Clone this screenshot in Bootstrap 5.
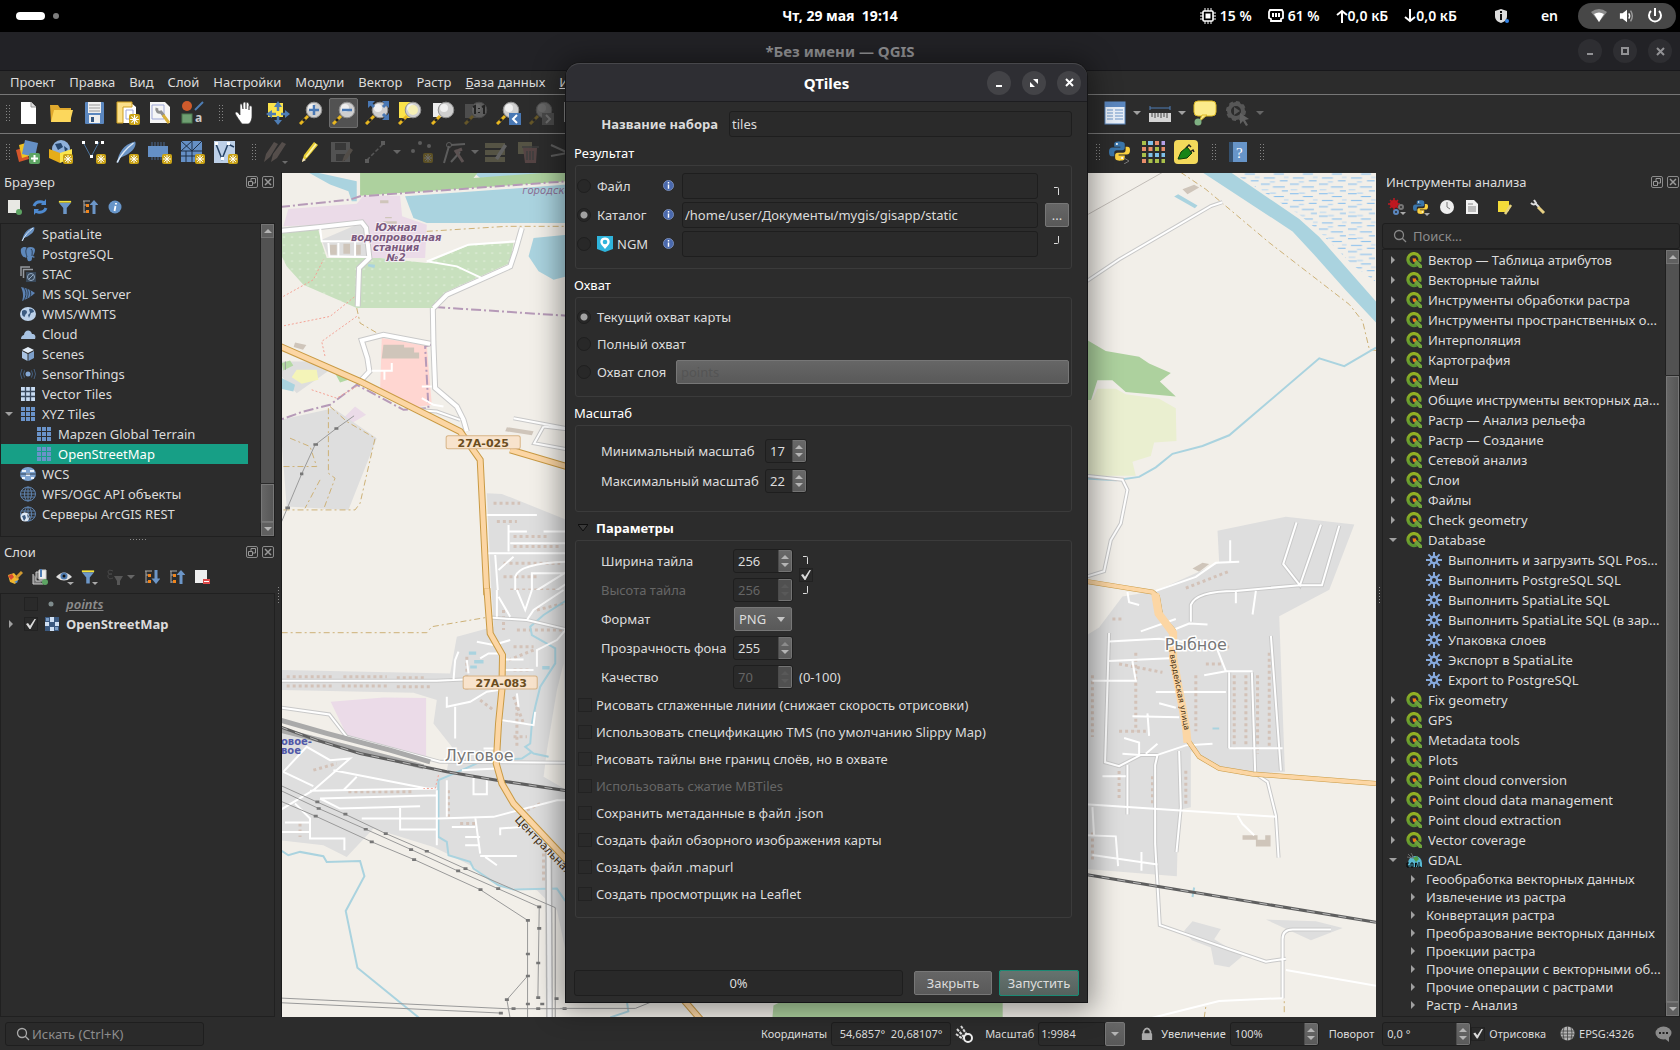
<!DOCTYPE html>
<html lang="ru" data-bs-theme="dark">
<head>
<meta charset="utf-8">
<meta name="viewport" content="width=device-width, initial-scale=1">
<title>QGIS — QTiles</title>
<link href="https://cdn.jsdelivr.net/npm/bootstrap@5.3.0/dist/css/bootstrap.min.css" rel="stylesheet">
<style>
body{font-family:"Noto Sans",sans-serif;font-size:13px;line-height:20px;background:#2c2c2c;color:#dcdcdc;overflow:hidden}
svg{display:block;flex:none}
button{color:inherit;font:inherit}
/* fixed spacers of the tool bars */
.sp2,.sp4,.sp8{flex:none;width:2px}
.sp4{width:4px}.sp8{width:8px}
.shellbar{height:32px;background:#000;color:#fff;font-size:14px;font-weight:600;padding:0 4px}
.shellbar .side{flex:1 1 0;min-width:0}
.clock{font-weight:700}
.ws-pill{width:29px;height:8px;border-radius:4px;background:#fff;margin-left:12px}
.ws-dot{width:6px;height:6px;border-radius:3px;background:#7d7d7d}
.syspill{height:26px;border-radius:13px;background:#474747;padding:0 13px;gap:12px;margin-left:20px}
.net{margin-right:20px}
.wintitle{height:39px;background:#222226;border-bottom:1px solid #18181b;color:#929295;font-weight:700;font-size:15px}
.wbtns{display:flex;justify-content:flex-end;gap:11px}
.wbtn{width:24px;height:24px;border-radius:12px;border:0;padding:0;background:#2e2e32;color:#929295;display:grid;place-items:center}
.menubar{height:23px;padding:0 0 2px 3px}
.menubar a{color:#dcdcdc;text-decoration:none;padding:0 7px;white-space:nowrap}
.tbar{height:39px;border-top:1px solid #777;padding:0 0 2px 4px}
.tbtn{width:33px;height:30px;border:0;background:none;padding:0;display:grid;place-items:center;flex:none}
.tbtn.off{opacity:.3}
.tbtn.pressed{background:#525252;border:1px solid #6e6e6e;border-radius:2px;width:29px;margin:0 2px}
.grip{width:5px;height:18px;margin:0 1px;flex:none;background-image:radial-gradient(#858585 1px,transparent 1px);background-size:3px 3px}
.grip-v{width:3px;height:18px;background-image:radial-gradient(#8a8a8a 1px,transparent 1px);background-size:3px 3px}
.grip-h{width:18px;height:3px;background-image:radial-gradient(#8a8a8a 1px,transparent 1px);background-size:3px 3px}
.drop{width:0;height:0;border:4px solid transparent;border-top-color:#a0a0a0;border-bottom:0;flex:none}
/* stretch of the tool bars that lies under the plug-in window */
.under-a{width:507px;flex:none}.under-b{width:516px;flex:none}
.ldock{width:275px;flex:none}
.rdock{width:298px;flex:none}
.split{width:6px;flex:none}
.lsplit{width:7px;border-right:1px solid #1c1c1c}
.dockhead{height:20px;padding:0 1px 0 4px}
.mini{width:12px;height:12px;border:1px solid #8a8a8a;border-radius:2px;padding:0;background:none;display:grid;place-items:center;color:#999}
.dtools{height:31px;padding:0 2px 1px}
.dtools .tbtn{width:25px;height:24px}
.treebox{border:1px solid #202020;display:flex;overflow:hidden}
.browser{height:314px}
.browser .tw{padding-right:3px}
.dsplit{height:5px}
.treebox ul{flex:1 1 0;min-width:0;overflow:hidden}
.treebox li{height:20px;line-height:20px;display:flex;align-items:center;white-space:nowrap;overflow:hidden}
.treebox li svg{width:16px;height:16px;margin-right:6px}
.treebox li span{overflow:hidden;text-overflow:ellipsis}
.treebox li .tickbox{margin:0 6px 0 4px}
.ghost{color:#8c8c8c}
.tw{width:19px;height:10px;flex:none;display:grid;place-items:center}
.tw.r::before{content:"";border:4px solid transparent;border-left:4px solid #a0a0a0;border-right:0}
.tw.d::before{content:"";border:4px solid transparent;border-top:4px solid #a0a0a0;border-bottom:0}
.ind{padding-left:16px}
.picked{background:#179f86;color:#fff;margin-right:12px}
.sbar{width:14px;flex:none;border-left:1px solid #202020;display:flex;flex-direction:column;background:#525252}
.sbar b{height:14px;background:#606060;border:1px solid #747474;display:grid;place-items:center;flex:none}
.sbar .thumb{background:linear-gradient(90deg,#666,#575757);border:1px solid #787878;outline:1px solid #2a2a2a}
.browser .thumb{height:38px}
.above{height:112px}
.tri-u,.tri-d{width:0;height:0;border:4px solid transparent}
.tri-u{border-bottom-color:#b4b4b4;border-top:0}
.tri-d{border-top-color:#b4b4b4;border-bottom:0}
.rtree li svg{margin-left:4px}
.rtree li.alg{padding-left:39px}
.rtree li.sub{height:18px;line-height:18px;padding-left:20px}
.rtree li.sub span{padding-left:4px}
.form-control.dk,.dk{background:#2a2a2a;border:1px solid #1e1e1e;border-radius:3px;color:#dcdcdc;font-size:13px;line-height:18px;padding:2px;min-height:0;height:26px;box-shadow:none}
.form-control.dk:disabled{background:#2a2a2a;color:#666}
.bare{background:none;border:0;outline:0;padding:0;color:#dcdcdc;font-size:13px;flex:1 1 0;min-width:0}
.bare::placeholder{color:#8d8d8d}
.statusbar{height:33px;font-size:11px}
.statusbar .dk{height:24px;font-size:11px}
.statusbar label{margin-right:4px}
.locator{width:199px;margin-left:5px}
.f120{width:120px}.f67{width:67px}.f20{width:20px}
.m8{margin-left:8px}.m10{margin-left:10px}.m16{margin-left:16px}.m21{margin-left:21px}
.spin.w89{width:89px}
.qwin{position:absolute;left:566px;top:63px;width:521px;background:#2c2c2c;border-radius:14px 14px 0 0;box-shadow:0 2px 28px 6px rgba(0,0,0,.4),0 0 0 1px #1d1d1f;z-index:5}
.qhead{height:39px;background:#2e2e33;border-top:1px solid #47474b;border-bottom:1px solid #1d1d20;border-radius:14px 14px 0 0;padding:0 6px;font-size:15px;font-weight:700;color:#fff}
.qhead .wbtn{background:#434347;color:#fff}
.qhead>div{flex:1 1 0}
.qbody{padding:9px 8px 6px 8px}
.qform{margin-right:7px}
.nmlab{width:144px;margin-right:11px}
.gtitle{height:28px;padding-top:6px;line-height:20px;font-size:13px;margin:0}
.gtitle.fold{padding-top:4px}
.gbox{border:1px solid #3b3b3b;border-radius:3px;margin-left:1px;padding:7px 2px 0 1px}
.g-out{height:104px}.g-ext{height:100px;padding-top:5px}.g-scale{height:87px;padding-top:10px}.g-par{padding:5px 2px 10px 2px}
.r29{height:29px}.r27{height:27px}.r30{height:30px}
.g-out .r29{align-items:flex-start}
.gbox .form-check-input{width:14px;height:14px;margin:0 6px 0 0;background-color:#282828;border:1px solid #1f1f1f;box-shadow:none;float:none;flex:none;opacity:1}
.gbox .form-check-input:checked[type=radio]{background:radial-gradient(circle,#a2a2a2 3px,#282828 4px);border-color:#1f1f1f}
.tickbox{appearance:none;width:14px;height:14px;margin:0;border:1px solid #222;background:#2a2a2a;flex:none;display:grid;place-items:center}
.tickbox:checked::before{content:"";width:10px;height:10px;background:#dadada;clip-path:polygon(0 50%,20% 40%,40% 68%,85% 0,100% 0,45% 100%,35% 100%)}
.lab{width:86px;height:26px;flex:none;display:flex;align-items:center}
.laylab{width:79px}
.gray{background:linear-gradient(#666,#595959);border:1px solid #777;border-radius:2px;color:#dcdcdc;font-size:13px;line-height:20px;padding:0;height:24px}
.dots{width:24px;margin:1px 0 0 7px}
.laysel{appearance:none;color:#545454!important;opacity:1!important;padding:0 4px}
.spin{display:flex;border:1px solid #1e1e1e;border-radius:3px;height:24px;background:#2a2a2a;flex:none}
.spin input{width:0;flex:1 1 0;border:0;background:none;color:#dcdcdc;padding:0 0 0 4px;font:inherit;appearance:textfield;-moz-appearance:textfield;outline:0}
.spin input::-webkit-inner-spin-button{appearance:none;margin:0}
.spin input:disabled{color:#656565}
.spin>span{width:14px;background:linear-gradient(#686868,#5a5a5a);border:1px solid #747474;border-radius:0 2px 2px 0;display:flex;flex-direction:column;justify-content:space-evenly;align-items:center;border-left-color:#4b4b4b}
.spin.dim>span{background:#505050}.spin.dim i{opacity:.1}
.w42{width:42px}.w60{width:60px}
.fieldlab{margin-left:24px;width:164px;flex:none}
.plabels{width:155px;padding-left:23px;flex:none}
.plabels+.caretbox{margin-left:1px}
.beside{margin-left:6px}
.dimtext{color:#666}
.qprog{height:26px;background:#292929;border:1px solid #1e1e1e;border-radius:3px;width:329px;font-size:13px;color:#dcdcdc}
.qfoot{margin-top:52px}
.closebtn{width:78px}
.btn.gray:hover{color:#fff}
.btn.run{width:80px;height:26px;margin-left:7px;background:linear-gradient(#66736f,#55625e);border-color:#17866f;outline:1px solid #1a8a74;outline-offset:-1px}
.fmt{appearance:none;width:58px;padding:0 4px}
.caretbox{position:relative;display:flex}
.caretbox .drop{position:absolute;right:7px;top:10px;border-top-color:#c4c4c4;border-width:5px 4px 0}
.work{min-height:0}
.canvas{background:#f2efe9;margin-top:1px}
#themap{position:absolute;inset:0;width:100%;height:100%}
#themap path{vector-effect:non-scaling-stroke;fill:none}
#themap .fa{stroke:none}
.road{stroke:#fff;stroke-width:2}
.case{stroke:#c9c9c9;stroke-width:4}
.wide{stroke-width:6}.widein{stroke-width:4}
.oc{stroke:#c99a44;stroke-width:7}.oo{stroke:#fcd6a4;stroke-width:5}
.thin-oc{stroke-width:5}.thin-oo{stroke-width:4}
.wat{stroke:#aad3df;stroke-width:2}
.pow{stroke:#9a9a9a;stroke-width:1}
.trk{stroke:#cdb177;stroke-width:1;stroke-dasharray:6 3 2 3}
.red{stroke:#f5a396;stroke-width:1;stroke-dasharray:2 2}
.bnd{stroke:#b69ab8;stroke-width:2;stroke-dasharray:10 3 2 3}
.hou{stroke:#d3c2b8;stroke-width:3;stroke-dasharray:3 3}
.rail{stroke:#5f5f5f;stroke-width:3}.raildash{stroke:#bbb;stroke-width:1;stroke-dasharray:8 8}
#themap .lake{fill:#aad3df}#themap .wood{fill:#add19e}#themap .ind-area{fill:#ebdbe8}#themap .town{fill:#dedede}#themap .mall{fill:#ffd6d1}#themap .house{fill:#cfc5ba}#themap .land{fill:#f2efe9}#themap .orch{fill:url(#trees)}#themap .bog{fill:url(#marsh)}#themap .golf{fill:#eaefd0}#themap .pole{fill:#777}#themap .park{fill:#b3d9a3}#themap .pitch{fill:#f4f4b8}
</style>
</head>
<body class="d-flex flex-column vh-100">
<svg width="0" height="0" class="position-absolute" aria-hidden="true"><defs>
<linearGradient id="gq" x1="0" y1="0" x2="0" y2="1"><stop offset="0" stop-color="#93b023"/><stop offset="1" stop-color="#589632"/></linearGradient>
<symbol id="q" viewBox="0 0 16 16"><path d="M10.500 13A6 6 0 1 1 13.600 9.600" fill="none" stroke="url(#gq)" stroke-width="3.200"/><path d="M8.500 8l2.200 0L16 13.200V16h-2.800L8.500 11.300z" fill="#6fa33c"/><path d="M6.600 6.200l3.400.4.200 1.600-1.600 2-1.600-.6z" fill="#ee7913"/></symbol>
<symbol id="alg" viewBox="0 0 16 16"><g stroke="#86a9dc" stroke-width="2"><path d="M8 0v16M0 8h16M2.4 2.4l11.200 11.200M13.600 2.400L2.400 13.600"/></g><circle cx="8" cy="8" r="4.400" fill="#86a9dc"/><circle cx="8" cy="8" r="2" fill="#2c2c2c"/></symbol>
<symbol id="gdal" viewBox="0 0 16 16"><path d="M2 11a7 7 0 0 1 14 0v4H2z" fill="#57b7d2"/><path d="M7 6l4-2 2 3-3 3z" fill="#4f9f49"/><path d="M1 5l6 1M5 1l3 5M2 2l4 4" stroke="#6a6a6a"/><path d="M3 11H1v4h2v-2M5 15v-4h2v4zM9.500 15v-4l1 0 1 4M13 10v5h2" stroke="#050505" fill="none"/></symbol>
<symbol id="feather" viewBox="0 0 16 16"><path d="M2 15C3 9 6 3 14 1c1 1 0 5-3 7-2 2-5 3-7 4l-1 3z" fill="#6a93c4"/><path d="M2 15C5 9 9 5 13 2" stroke="#dbe8f6" fill="none"/></symbol>
<symbol id="pg" viewBox="0 0 16 16"><path d="M1 3c2-3 5-2 6-1 3-2 8-1 8 2 0 2-1 4-2 6l2 1c-1 1-2 1-3 0 0 2 0 4-2 4-2 1-3-1-3-4-1 1-2 1-2 0C3 12 0 7 1 3z" fill="#5e88bb"/><path d="M7 2c-2 3-1 5 0 9M11 3c2 2 1 4 1 7" stroke="#2c3e55" fill="none"/></symbol>
<symbol id="stac" viewBox="0 0 16 16"><path d="M1 10V1h9M3.500 12V3.500H13" fill="none" stroke="#95999f" stroke-width="1.500"/><rect x="6" y="6" width="10" height="10" fill="#38485a"/><circle cx="11" cy="11" r="3.500" fill="none" stroke="#93aac4"/><path d="M9 13l4-4" stroke="#93aac4"/></symbol>
<symbol id="ms" viewBox="0 0 16 16"><path d="M1 1c5 1 10 3 14 6-3 3-8 6-13 8 2-5 1-9-1-14z" fill="#5d83b4"/><path d="M4 2c3 4 2 9 0 12M7 3c2 4 1 7 0 9M10 4c1 3 1 5 0 7" stroke="#283748" fill="none"/></symbol>
<symbol id="glb" viewBox="0 0 16 16"><ellipse cx="8" cy="8" rx="8" ry="7" fill="#bdd2ea"/><path d="M2 5c2-2 5-1 5 1s-2 2-2 4-3 0-3-2zM9 3c3-1 5 1 5 3l-3 1-2 5-1-3 2-2z" fill="#3c5b80"/></symbol>
<symbol id="cloud" viewBox="0 0 16 16"><path d="M1 13c0-3 2-4 3-4 0-4 6-7 8-1 3 0 4 2 3 5z" fill="#a9c3e2"/></symbol>
<symbol id="cube" viewBox="0 0 16 16"><path d="M2 4l6-3 6 3-6 3z" fill="#e3edf8"/><path d="M2 5l5.500 3v7L2 12z" fill="#a9c3e2"/><path d="M14 5L8.500 8v7l5.500-3z" fill="#7c9fca"/></symbol>
<symbol id="sens" viewBox="0 0 16 16"><circle cx="8" cy="8" r="2.500" fill="#86a9d5"/><path d="M4.500 4.500q-2 3.500 0 7M11.500 4.500q2 3.500 0 7M2 3q-3 5 0 10M14 3q3 5 0 10" stroke="#46607f" fill="none"/></symbol>
<symbol id="vt" viewBox="0 0 16 16"><rect x="1" y="1" width="14" height="14" fill="#c9dcf2"/><path d="M1 5.500h14M1 10.500h14M5.500 1v14M10.500 1v14" stroke="#3a4a5e" stroke-width="1.300"/></symbol>
<symbol id="xyz" viewBox="0 0 16 16"><path d="M1 1h4v4H1zM6 1h4v4H6zM11 1h4v4h-4zM1 6h4v4H1zM6 6h4v4H6zM11 6h4v4h-4zM1 11h4v4H1zM6 11h4v4H6zM11 11h4v4h-4z" fill="#6a93c9"/></symbol>
<symbol id="wcs" viewBox="0 0 16 16"><ellipse cx="8" cy="8" rx="8" ry="7" fill="#7ea3d0"/><path d="M2 4h4v2H2zM10 4h4v2h-4zM6 7h4v3H6zM2 11h3v2H2zM11 11h3v2h-3z" fill="#e9f1fa"/><path d="M0 8h16" stroke="#2c3e55"/></symbol>
<symbol id="wfs" viewBox="0 0 16 16"><g fill="none" stroke="#5f83af"><ellipse cx="8" cy="8" rx="7.500" ry="7"/><ellipse cx="8" cy="8" rx="3.500" ry="7"/><path d="M8 1v14M1 5h14M.500 8h15M1 11h14"/></g></symbol>
<symbol id="arc" viewBox="0 0 16 16"><use href="#wfs"/><circle cx="5" cy="11" r="4.500" fill="#dfe9f5"/><path d="M2 10l3-1 1 3-2 3zM7 8l2 2-1 3z" fill="#3c5b80"/></symbol>
<symbol id="ras" viewBox="0 0 16 16"><rect x="1" y="1" width="14" height="14" fill="#3c5a80"/><path d="M6 1h4v5H6zM1 6h4v4H1zM11 6h4v4h-4zM6 11h4v4H6z" fill="#cfe0f4"/><path d="M2 2h3v3H2zM11 11h3v3h-3z" fill="#7b9cc4"/></symbol>
<symbol id="star" viewBox="0 0 10 10"><rect width="10" height="10" rx="2" fill="#caa316"/><path d="M5 1v8M1 5h8M2.200 2.200l5.600 5.600M7.800 2.200L2.200 7.800" stroke="#fff"/></symbol>
<symbol id="lens" viewBox="0 0 24 24"><path d="M1 23l8-8" stroke="#e8b720" stroke-width="3"/><path d="M4 20l2-2" stroke="#222" stroke-width="3"/><circle cx="15" cy="9" r="7.800" fill="#cfcfcf" stroke="#8f8f8f"/><ellipse cx="13" cy="7" rx="4" ry="4" fill="#f0f0f0"/></symbol>
<symbol id="info" viewBox="0 0 12 12"><circle cx="6" cy="6" r="5.500" fill="#4a69ad" stroke="#8aa0cf" stroke-width=".8"/><path d="M6 5v4.500M6 2.300v1.500" stroke="#fff" stroke-width="1.600"/></symbol>
<symbol id="funnel" viewBox="0 0 16 16"><path d="M1 3h14l-5 6v7H6V9z" fill="#6c96c8"/><path d="M1 1h14v2H1z" fill="#f4e33a"/></symbol>
<symbol id="coll" viewBox="0 0 16 16"><path d="M2 2v12M1 2h7M2 6h4M2 13h4" stroke="#aaa" fill="none"/><path d="M4 5h3v3H4zM4 11h3v3H4z" fill="#f0851c"/><path d="M12 15V4" stroke="#6c96c8" stroke-width="3"/><path d="M7.500 6L12 1l4.500 5z" fill="#6c96c8"/></symbol>
<symbol id="py" viewBox="0 0 24 24"><path d="M12 1c-5 0-6 1-6 3v3h7v1H4c-3 0-4 2-4 5s1 5 3 5h3v-4c0-2 1-3 3-3h6c2 0 3-1 3-3V4c0-2-2-3-6-3z" fill="#3b76ab"/><path d="M12 23c5 0 6-1 6-3v-3h-7v-1h9c3 0 4-2 4-5s-1-4-3-4h-2v3c0 3-1 4-3 4h-6c-2 0-3 1-3 3v3c0 2 2 3 6 3z" fill="#fbd140"/><circle cx="9" cy="4" r="1.200" fill="#fff"/><circle cx="15" cy="20" r="1.200" fill="#fff"/></symbol>
<symbol id="pencil" viewBox="0 0 24 24"><path d="M5 22l2-7L17 2l4 3L10 18z" fill="#e8cf34"/><path d="M9 17L19 4" stroke="#fff6b0" stroke-width="1.500"/><path d="M5 22l1-4 3 2z" fill="#f3e4c4"/></symbol>
<symbol id="mx" viewBox="0 0 8 8"><path d="M1 1l6 6M7 1L1 7" stroke="currentColor" stroke-width="1.500"/></symbol>
<symbol id="fl" viewBox="0 0 8 8"><path d="M.500 3.500h4v4h-4zM3 3V.500h4.500V5H5" stroke="currentColor" fill="none"/></symbol>
</defs></svg>

<header class="shellbar d-flex align-items-center">
  <div class="side d-flex align-items-center gap-2"><span class="ws-pill"></span><span class="ws-dot"></span></div>
  <div class="clock">Чт, 29 мая&nbsp; 19:14</div>
  <div class="side d-flex align-items-center justify-content-end">
    <svg class="me-1" width="16" height="16" viewBox="0 0 16 16"><rect x="3" y="3" width="10" height="10" rx="1" fill="none" stroke="#fff" stroke-width="1.600"/><rect x="5.500" y="5.500" width="5" height="5" fill="#fff"/><path d="M5 0v3M8 0v3M11 0v3M5 13v3M8 13v3M11 13v3M0 5h3M0 8h3M0 11h3M13 5h3M13 8h3M13 11h3" stroke="#fff"/></svg><span class="me-3">15 %</span>
    <svg class="me-1" width="16" height="14" viewBox="0 0 16 14"><path d="M2 1h12l1 2v6l-2 1v2H3v-2L1 9V3z" fill="none" stroke="#fff" stroke-width="1.800"/><path d="M4 4h2v4H4zM7 4h2v4H7zM10 4h2v4h-2z" fill="#fff"/></svg><span class="me-3">61 %</span>
    <svg width="12" height="14" viewBox="0 0 12 14"><path d="M6 14V2M1 6l5-4 5 4" fill="none" stroke="#fff" stroke-width="2"/></svg><span class="me-3">0,0 кБ</span>
    <svg width="12" height="14" viewBox="0 0 12 14"><path d="M6 0v12M1 8l5 4 5-4" fill="none" stroke="#fff" stroke-width="2"/></svg><span class="net">0,0 кБ</span>
    <svg class="ms-3" width="16" height="16" viewBox="0 0 16 16"><path d="M8 1l6 2v5c0 4-3 6-6 7-3-1-6-3-6-7V3z" fill="#ddd"/><path d="M8 6v6M8 3v2" stroke="#111" stroke-width="2"/><circle cx="14" cy="13" r="2" fill="#3584e4"/></svg>
    <span class="ms-4 ps-2">en</span>
    <div class="syspill d-flex align-items-center"><svg width="16" height="16" viewBox="0 0 16 16"><path d="M0 4q8-6 16 0L8 14z" fill="#8b8b8b"/><path d="M3 6q5-3 10 0l-5 8z" fill="#fff"/></svg><svg width="16" height="16" viewBox="0 0 18 16"><path d="M1 5h3l5-4v14l-5-4H1z" fill="#fff"/><path d="M11 5q2 3 0 6" stroke="#fff" stroke-width="1.600" fill="none"/><path d="M13 2q4 6 0 12" stroke="#999" stroke-width="1.600" fill="none"/></svg><svg width="16" height="16" viewBox="0 0 16 16"><path d="M8 0v8M4 3a6 6 0 1 0 8 0" stroke="#fff" stroke-width="2" fill="none"/></svg></div>
  </div>
</header>

<div class="wintitle d-flex align-items-center px-2">
  <div class="flex-fill w-25"></div><div>*Без имени — QGIS</div>
  <div class="flex-fill w-25 wbtns">
    <button class="wbtn" aria-label="Свернуть"><svg width="8" height="8"><path d="M1 7h6" stroke="currentColor" stroke-width="2"/></svg></button>
    <button class="wbtn" aria-label="Развернуть"><svg width="8" height="8"><rect x="1" y="1" width="6" height="6" fill="none" stroke="currentColor" stroke-width="2"/></svg></button>
    <button class="wbtn" aria-label="Закрыть окно"><svg width="9" height="9" viewBox="0 0 9 9"><path d="M1 1l7 7M8 1L1 8" stroke="currentColor" stroke-width="2"/></svg></button>
  </div>
</div>

<nav class="menubar d-flex align-items-center"><a href="#">Проект</a><a href="#">Правка</a><a href="#">Вид</a><a href="#">Слой</a><a href="#">Настройки</a><a href="#">Модули</a><a href="#">Вектор</a><a href="#">Растр</a><a href="#"><u>Б</u>аза данных</a><a href="#"><u>И</u>нтернет</a></nav>

<div class="tbar d-flex align-items-center">
  <span class="grip"></span>
  <button class="tbtn" aria-label="Новый"><svg width="24" height="24"><path d="M5 1h10l5 5v17H5z" fill="#fff"/><path d="M15 1v5h5" fill="#ddd" stroke="#999"/></svg></button>
  <button class="tbtn" aria-label="Открыть"><svg width="24" height="24"><path d="M1 4h8l2 3h11v14H2z" fill="#e0a92d"/><path d="M5 9h19l-3 12H2z" fill="#fcd75c"/></svg></button>
  <button class="tbtn" aria-label="Сохранить"><svg width="24" height="24"><rect x="3" y="1" width="19" height="22" rx="1" fill="#5b87bf"/><rect x="6" y="1" width="13" height="11" fill="#efefef"/><path d="M7 4h11M7 7h11M7 10h11" stroke="#999"/><rect x="7" y="14" width="11" height="8" fill="#eee"/><rect x="9" y="16" width="3" height="5" fill="#35567e"/></svg></button>
  <button class="tbtn" aria-label="Новый макет"><svg width="26" height="24"><path d="M3 1h13l6 5v16H3z" fill="#fff"/><path d="M3 1h15v5H9v16H3z" fill="#fbe08a" stroke="#cf9f1c"/><path d="M12 9h7v9h-7z" fill="none" stroke="#9fa8d8"/><use href="#star" x="15" y="13" width="11" height="11"/></svg></button>
  <button class="tbtn" aria-label="Макеты"><svg width="24" height="24"><path d="M2 1h15l5 5v16H2z" fill="#f6f6f6"/><path d="M4 4h12v14H4z" fill="none" stroke="#9fa8d8"/><path d="M9 7c-1 3 1 5 4 4l3 4" stroke="#8f8f8f" stroke-width="3" fill="none"/><path d="M15 14l6 8" stroke="#d9b13a" stroke-width="3"/></svg></button>
  <button class="tbtn" aria-label="Стили"><svg width="26" height="26"><circle cx="7" cy="6" r="5" fill="#cf5b2c"/><path d="M15 10l8-8" stroke="#4e7db5" stroke-width="2"/><rect x="2" y="14" width="10" height="9" fill="#6f9f72" stroke="#4d7a51"/><text x="15" y="22" font-size="12" font-weight="700" fill="#ccc">a</text></svg></button>
  <span class="sp8"></span><span class="grip"></span><span class="sp4"></span>
  <button class="tbtn" aria-label="Прокрутка"><svg width="24" height="24"><path d="M7 13V4q0-2 2-1l1 5V2q2-2 3 0v6-6q2-2 3 1v6-4q3-1 3 1v9c0 4-2 8-4 8H9c-2-3-6-8-7-11 1-2 3-1 5 2z" fill="#fff" stroke="#333" stroke-width=".7"/></svg></button>
  <button class="tbtn" aria-label="К выделению"><svg width="24" height="24"><path d="M2 2h15v14H2z" fill="#fbe34a"/><path d="M12 4v17M4 13h17" stroke="#4e7db5" stroke-width="2.500" stroke-dasharray="6 5"/><path d="M12 0l4 6H8zM12 24l4-5H8zM0 13l6-4v8zM24 13l-5-4v8z" fill="#4e7db5"/></svg></button>
  <button class="tbtn" aria-label="Увеличить"><svg width="24" height="24"><use href="#lens" width="24" height="24"/><path d="M15 4v10M10 9h10" stroke="#4978b4" stroke-width="2.500"/></svg></button>
  <button class="tbtn pressed" aria-label="Уменьшить"><svg width="24" height="24"><use href="#lens" width="24" height="24"/><path d="M10 9h10" stroke="#4978b4" stroke-width="2.500"/></svg></button>
  <button class="tbtn" aria-label="Полный охват"><svg width="24" height="24"><use href="#lens" width="24" height="24"/><path d="M3 0h7L3 7zM24 0v7l-7-7zM24 19v-7l-7 7z" fill="#4978b4"/><path d="M4 1l5 5M23 1l-5 5M23 18l-5-5" stroke="#4978b4" stroke-width="3"/></svg></button>
  <button class="tbtn" aria-label="К выделенному"><svg width="24" height="24"><path d="M1 1h12v16H1z" fill="#fbe34a"/><use href="#lens" width="24" height="24"/><circle cx="15" cy="9" r="5" fill="#f5efb5"/></svg></button>
  <button class="tbtn" aria-label="К слою"><svg width="24" height="24"><path d="M2 2h12v14H2z" fill="#eee"/><use href="#lens" width="24" height="24"/></svg></button>
  <button class="tbtn off" aria-label="Масштаб один к одному"><svg width="24" height="24"><path d="M1 3h12v14H1z" fill="#999"/><use href="#lens" width="24" height="24"/><path d="M9 6l2-1v8M15 7v1M15 11v1M18 6l2-1v8" stroke="#111" stroke-width="2" fill="none"/></svg></button>
  <button class="tbtn" aria-label="Предыдущий"><svg width="26" height="24"><use href="#lens" width="24" height="24"/><rect x="13" y="12" width="12" height="12" fill="#4978b4"/><path d="M21 14l-4 4 4 4" stroke="#fff" stroke-width="2" fill="none"/></svg></button>
  <button class="tbtn off" aria-label="Следующий"><svg width="26" height="24"><use href="#lens" width="24" height="24"/><rect x="13" y="12" width="12" height="12" fill="#888"/><path d="M17 14l4 4-4 4" stroke="#fff" stroke-width="2" fill="none"/></svg></button>
  <button class="tbtn" aria-label="Новая карта"><svg width="24" height="24"><path d="M2 1h20v20H2z" fill="none" stroke="#ddd"/></svg></button>
  <span class="under-a"></span>
  <button class="tbtn" aria-label="Таблица"><svg width="22" height="24"><rect x="1" y="1" width="20" height="22" fill="#e8eff8" stroke="#5b87bf"/><path d="M1 1h20v5H1z" fill="#5b87bf"/><path d="M3 9h6M11 9h8M3 12h6M11 12h8M3 15h6M11 15h8M3 18h6M11 18h8" stroke="#6c96c8"/></svg></button>
  <span class="sp2"></span><i class="drop"></i><span class="sp2"></span>
  <button class="tbtn" aria-label="Измерить"><svg width="24" height="20"><path d="M2 5h20M2 3v4M22 3v4" stroke="#4e7db5"/><rect x="1" y="10" width="22" height="9" fill="#d5d5d5"/><path d="M4 10v4M7 10v5M10 10v4M13 10v5M16 10v4M19 10v5" stroke="#444"/></svg></button>
  <span class="sp2"></span><i class="drop"></i><span class="sp2"></span>
  <button class="tbtn" aria-label="Подсказки"><svg width="24" height="26"><rect x="1" y="1" width="22" height="15" rx="4" fill="#fbeb8c" stroke="#dcb824"/><path d="M9 15l-3 7 8-7z" fill="#fbeb8c" stroke="#dcb824"/><circle cx="5" cy="22" r="3.500" fill="#7fb183"/></svg></button>
  <button class="tbtn off" aria-label="Действие"><svg width="24" height="26"><circle cx="10" cy="11" r="7" fill="none" stroke="#bbb" stroke-width="4"/><circle cx="10" cy="11" r="9" fill="none" stroke="#bbb" stroke-width="2" stroke-dasharray="4 3"/><path d="M8 7l6 4-6 4z" fill="#bbb"/><path d="M14 13l9 6-4 1 3 5-2 1-3-5-3 3z" fill="#ddd"/></svg></button>
  <span class="sp2"></span><i class="drop opacity-50"></i>
</div>

<div class="tbar d-flex align-items-center">
  <span class="grip"></span>
  <button class="tbtn" aria-label="Источники данных"><svg width="26" height="24"><path d="M1 10l10-3 3 12-10 3z" fill="#d4552b"/><path d="M4 5l10-3 3 13-10 3z" fill="#f0c323"/><path d="M10 0l13 3-3 14-13-3z" fill="#6590c6"/><rect x="14" y="13" width="11" height="11" rx="2" fill="#5da463"/><path d="M19.500 15v7M16 18.500h7" stroke="#fff" stroke-width="2"/></svg></button>
  <button class="tbtn" aria-label="GeoPackage"><svg width="26" height="24"><circle cx="13" cy="9" r="9" fill="#8fb1dc"/><path d="M7 4l6-1 2 4-5 3zM16 6l4 3-3 3z" fill="#26466d"/><path d="M1 9l11 4v10L1 18z" fill="#e5ad19"/><path d="M12 13l12-4v9l-12 5z" fill="#fbe54d"/><use href="#star" x="15" y="14" width="10" height="10"/></svg></button>
  <button class="tbtn" aria-label="Shapefile"><svg width="26" height="24"><path d="M2 2l8 15 8-15" stroke="#4d759f" fill="none"/><path d="M1 1h3v3H1zM9 15h3v3H9zM14 1h3v3h-3zM20 1h3v3h-3z" fill="#fff"/><use href="#star" x="15" y="14" width="10" height="10"/></svg></button>
  <button class="tbtn" aria-label="SpatiaLite"><svg width="26" height="24"><use href="#feather" width="24" height="24"/><use href="#star" x="15" y="14" width="10" height="10"/></svg></button>
  <button class="tbtn" aria-label="Временный слой"><svg width="26" height="24"><path d="M5 2v18M8 2v18M11 2v18M14 2v18M17 2v18" stroke="#4a6890"/><rect x="1" y="6" width="20" height="11" fill="#6590c6"/><use href="#star" x="15" y="14" width="10" height="10"/></svg></button>
  <button class="tbtn" aria-label="Mesh"><svg width="26" height="24"><rect x="1" y="1" width="21" height="21" fill="#6590c6"/><path d="M1 11h21M12 1v21M1 1l11 10M12 1L1 11M12 11L22 1M1 16h21M6 11v11" stroke="#1e2f45" fill="none"/><use href="#star" x="15" y="14" width="10" height="10"/></svg></button>
  <button class="tbtn" aria-label="Виртуальный слой"><svg width="26" height="24"><rect x="1" y="1" width="21" height="22" fill="#bdd0e8"/><path d="M3 4l6 15 6-15 6 3" stroke="#264264" stroke-width="1.500" fill="none"/><path d="M2 2h3v3H2zM8 17h3v3H8zM14 2h3v3h-3z" fill="#fff"/><use href="#star" x="15" y="14" width="10" height="10"/></svg></button>
  <span class="sp8"></span><span class="grip"></span><span class="sp2"></span>
  <button class="tbtn off" aria-label="Правки"><svg width="26" height="24"><path d="M1 22l2-8L11 2l4 2L7 17zM8 22l2-8L19 2l4 2-9 14z" fill="#b39c95"/><path d="M19 21h6l-3 3z" fill="#fff"/></svg></button>
  <button class="tbtn" aria-label="Режим правки"><svg width="24" height="24"><use href="#pencil" width="24" height="24"/></svg></button>
  <button class="tbtn off" aria-label="Сохранить правки"><svg width="24" height="24"><rect x="1" y="2" width="19" height="20" fill="#aaa"/><path d="M5 3h11v7H5zM6 14h9v7H6z" fill="#555"/><path d="M12 22l2-6 6-8 3 2-6 9z" fill="#a98"/></svg></button>
  <button class="tbtn off" aria-label="Сегмент"><svg width="24" height="24"><path d="M4 20L20 4" stroke="#bbb" stroke-width="1.500" stroke-dasharray="4 2"/><path d="M2 19h4v4H2zM18 1h4v4h-4z" fill="#ccc"/></svg></button>
  <span class="sp2"></span><i class="drop opacity-50"></i><span class="sp4"></span>
  <button class="tbtn off" aria-label="Точка"><svg width="24" height="24"><circle cx="3" cy="11" r="2" fill="#ccc"/><circle cx="10" cy="3" r="2" fill="#ccc"/><circle cx="19" cy="6" r="2" fill="#ccc"/><use href="#star" x="13" y="13" width="10" height="10"/></svg></button>
  <button class="tbtn off" aria-label="Узлы"><svg width="24" height="24"><path d="M1 23L6 6M8 5l14-1M8 22l9-10" stroke="#ccc" stroke-width="2" fill="none"/><circle cx="6" cy="5" r="2.500" fill="none" stroke="#ccc"/><path d="M12 10l8 12M12 12l7-3" stroke="#caa" stroke-width="3"/></svg></button>
  <i class="drop opacity-50"></i>
  <button class="tbtn off" aria-label="Атрибуты"><svg width="24" height="24"><path d="M1 3h20v5H1zM1 10h20v5H1zM1 17h20v5H1z" fill="#b5ae7c"/><path d="M11 18l9-14 3 2-9 14z" fill="#ddd"/></svg></button>
  <button class="tbtn off" aria-label="Удалить"><svg width="24" height="24"><path d="M1 2h14v12H1z" fill="#b5ae7c"/><path d="M6 8h14l-1 15H8z" fill="#b57c7c"/><path d="M5 7h17M10 11v9M13 11v9M16 11v9" stroke="#666" stroke-width="1.500"/></svg></button>
  <button class="tbtn off" aria-label="Вырезать"><svg width="24" height="24"><path d="M1 5l22 10M1 16l22-4" stroke="#ccc" stroke-width="2"/></svg></button>
  <span class="under-b"></span>
  <span class="grip"></span><span class="sp2"></span>
  <button class="tbtn" aria-label="Python"><svg width="22" height="24"><use href="#py" width="21" height="22"/><path d="M15 18l5 3-5 3" stroke="#777" fill="none"/></svg></button>
  <button class="tbtn" aria-label="Сетка"><svg width="24" height="24"><g fill="none" stroke-width="4" stroke-dasharray="4 2.500"><path d="M1 3h23" stroke="#b6a0e8"/><path d="M1 9h23" stroke="#e88d6a"/><path d="M1 15h23" stroke="#7fc1ea"/><path d="M1 21h23" stroke="#a9c04a"/></g><path d="M1 1h4v4H1zM14 7h4v4h-4zM1 13h4v4H1z" fill="#a9c04a"/><path d="M14 1h4v4h-4zM1 19h4v4H1z" fill="#e88d6a"/><path d="M7 1h5v4H7z" fill="#7fc1ea"/></svg></button>
  <button class="tbtn" aria-label="Модули"><svg width="24" height="24"><rect width="24" height="24" rx="4" fill="#f3d95b"/><path d="M4 19l3-7 6-5 5 6-5 5-7 1z" fill="#168416" stroke="#0b3d0b"/><path d="M12 8l3-3 2 2M16 12l3-2 1 2" stroke="#222" stroke-width="1.500" fill="none"/></svg></button>
  <span class="sp8"></span><span class="grip"></span><span class="sp4"></span>
  <button class="tbtn" aria-label="Справка"><svg width="20" height="24"><rect x="1" y="2" width="18" height="20" fill="#6795c9"/><rect x="1" y="2" width="4" height="20" fill="#35516f"/><text x="8" y="18" font-size="15" fill="#fff" font-family="Liberation Serif">?</text></svg></button>
  <span class="sp4"></span><span class="grip"></span>
</div>

<main class="work d-flex flex-grow-1">
  <aside class="ldock d-flex flex-column">
    <div class="dockhead d-flex align-items-center"><span class="me-auto">Браузер</span><button class="mini" aria-label="Открепить"><svg width="8" height="8"><use href="#fl"/></svg></button><button class="mini ms-1" aria-label="Закрыть панель"><svg width="8" height="8"><use href="#mx"/></svg></button></div>
    <div class="dtools d-flex align-items-center">
      <button class="tbtn" aria-label="Добавить"><svg width="16" height="16"><path d="M1 1h12v13H1z" fill="#e8e8e4"/><circle cx="12" cy="13" r="3" fill="#5da463"/></svg></button>
      <button class="tbtn" aria-label="Обновить"><svg width="16" height="16"><path d="M2 7q2-5 8-4l3 1M14 9q-2 5-8 4l-3-1" fill="none" stroke="#4e8ad0" stroke-width="3"/><path d="M14 0v6H9zM2 16v-6h5z" fill="#4e8ad0"/></svg></button>
      <button class="tbtn" aria-label="Фильтр"><svg width="14" height="16"><use href="#funnel"/></svg></button>
      <button class="tbtn" aria-label="Свернуть всё"><svg width="16" height="16"><use href="#coll"/></svg></button>
      <button class="tbtn" aria-label="Свойства"><svg width="14" height="14"><circle cx="7" cy="7" r="6.500" fill="#6795c9"/><path d="M7.500 6l-1 5M8 3v1.500" stroke="#fff" stroke-width="1.800"/></svg></button>
    </div>
    <div class="treebox browser">
      <ul class="list-unstyled m-0">
        <li><i class="tw"></i><svg><use href="#feather"/></svg>SpatiaLite</li>
        <li><i class="tw"></i><svg><use href="#pg"/></svg>PostgreSQL</li>
        <li><i class="tw"></i><svg><use href="#stac"/></svg>STAC</li>
        <li><i class="tw"></i><svg><use href="#ms"/></svg>MS SQL Server</li>
        <li><i class="tw"></i><svg><use href="#glb"/></svg>WMS/WMTS</li>
        <li><i class="tw"></i><svg><use href="#cloud"/></svg>Cloud</li>
        <li><i class="tw"></i><svg><use href="#cube"/></svg>Scenes</li>
        <li><i class="tw"></i><svg><use href="#sens"/></svg>SensorThings</li>
        <li><i class="tw"></i><svg><use href="#vt"/></svg>Vector Tiles</li>
        <li><i class="tw d"></i><svg><use href="#xyz"/></svg>XYZ Tiles</li>
        <li class="ind"><i class="tw"></i><svg><use href="#xyz"/></svg>Mapzen Global Terrain</li>
        <li class="ind picked"><i class="tw"></i><svg><use href="#xyz"/></svg>OpenStreetMap</li>
        <li><i class="tw"></i><svg><use href="#wcs"/></svg>WCS</li>
        <li><i class="tw"></i><svg><use href="#wfs"/></svg>WFS/OGC API объекты</li>
        <li><i class="tw"></i><svg><use href="#arc"/></svg>Серверы ArcGIS REST</li>
      </ul>
      <div class="sbar"><b><i class="tri-u"></i></b><span class="flex-grow-1"></span><span class="thumb"></span><b><i class="tri-d"></i></b></div>
    </div>
    <div class="dsplit d-flex justify-content-center align-items-center"><span class="grip-h"></span></div>
    <div class="dockhead d-flex align-items-center"><span class="me-auto">Слои</span><button class="mini" aria-label="Открепить"><svg width="8" height="8"><use href="#fl"/></svg></button><button class="mini ms-1" aria-label="Закрыть панель"><svg width="8" height="8"><use href="#mx"/></svg></button></div>
    <div class="dtools d-flex align-items-center">
      <button class="tbtn" aria-label="Стиль"><svg width="16" height="16"><path d="M1 6l6-2 5 6-4 5-5-2z" fill="#f1b62e"/><path d="M1 7l4-2 2 3-3 3z" fill="#d84b32"/><path d="M7 13l4-2-1 3z" fill="#4e8ad0"/><path d="M9 9l6-6" stroke="#d09a31" stroke-width="3"/></svg></button>
      <button class="tbtn" aria-label="Группа"><svg width="16" height="16"><path d="M1 5v10h10M4 3h8v9H4z" stroke="#ccc" fill="#777"/><path d="M7 1h7v9H7z" stroke="#ccc" fill="#eee"/><path d="M9 0v8" stroke="#4e7db5" stroke-width="2"/><circle cx="13" cy="13" r="3" fill="#5da463"/></svg></button>
      <button class="tbtn" aria-label="Видимость"><svg width="18" height="16"><path d="M0 8q8-9 16 0-8 7-16 0" fill="#ddd"/><circle cx="8" cy="7" r="3.500" fill="#4d79ae"/><circle cx="8" cy="7" r="1.500" fill="#111"/><path d="M11 13h7l-3.500 3z" fill="#aaa"/></svg></button>
      <button class="tbtn" aria-label="Фильтр"><svg width="17" height="16"><use href="#funnel" width="14" height="15"/><path d="M11 13h6l-3 3z" fill="#aaa"/></svg></button>
      <button class="tbtn off" aria-label="Выражение"><svg width="16" height="16"><path d="M6 2Q1 0 1 3t4 2Q0 5 1 8t5 1" stroke="#888" fill="none"/><path d="M7 7h9l-3 5v4h-3v-4z" fill="#bbb"/></svg></button>
      <i class="drop opacity-50"></i><span class="sp4"></span>
      <button class="tbtn" aria-label="Развернуть всё"><svg width="16" height="16"><path d="M2 2v12M1 2h7M2 6h4M2 13h4" stroke="#aaa" fill="none"/><path d="M4 5h3v3H4zM4 11h3v3H4z" fill="#f0851c"/><path d="M12 1v10" stroke="#6c96c8" stroke-width="3"/><path d="M7.500 9.500L12 15l4.500-5.500z" fill="#6c96c8"/></svg></button>
      <button class="tbtn" aria-label="Свернуть всё"><svg width="16" height="16"><use href="#coll"/></svg></button>
      <button class="tbtn" aria-label="Удалить слой"><svg width="16" height="16"><path d="M1 1h12v13H1z" fill="#eee"/><rect x="9" y="10" width="7" height="5" fill="#dd4b4b"/><path d="M10 12.500h5" stroke="#fff"/></svg></button>
    </div>
    <div class="treebox flex-grow-1">
      <ul class="list-unstyled m-0">
        <li><i class="tw"></i><input class="tickbox" type="checkbox" id="l1"><svg><circle cx="7" cy="8" r="2.500" fill="#7f8c8d"/></svg><label for="l1" class="ghost fst-italic fw-semibold text-decoration-underline">points</label></li>
        <li><i class="tw r"></i><input class="tickbox" type="checkbox" id="l2" checked><svg><use href="#ras"/></svg><label for="l2" class="fw-bold">OpenStreetMap</label></li>
      </ul>
    </div>
  </aside>
  <div class="split lsplit d-flex align-items-center justify-content-center"><span class="grip-v"></span></div>

  <section class="canvas flex-grow-1 position-relative overflow-hidden">
    <svg id="themap" viewBox="282 173 1093 844" preserveAspectRatio="xMidYMid slice" role="img" aria-label="OpenStreetMap">
      <defs>
        <pattern id="trees" width="8" height="8" patternUnits="userSpaceOnUse" patternTransform="scale(3)"><rect width="8" height="8" fill="#c8e0be"/><rect x="3" y="3" width="2" height="1" fill="#e8f3e2"/></pattern>
        <pattern id="marsh" width="87" height="40" patternUnits="userSpaceOnUse"><path d="M3 3h26M42 8h30M12 15h33M60 20h23M3 26h27M39 31h36M66 38h18" stroke="#4aa3f0" stroke-width="1.500"/><path d="M30 2h18M72 14h14M30 22h15M5 36h20" stroke="#b5d6f2" stroke-width="2"/></pattern>
      </defs>
      <rect x="282" y="173" width="1093" height="844" fill="#f2efe9"/>
      <!-- north-west -->
      <g transform="translate(280 170) scale(.33333)">
        <path class="fa lake" d="M70 0L230 35 230 95 215 95 205 65 150 45zM375 80L860 45V160H520L440 160 400 145zM760 205L860 195V320L820 330 775 305 745 260zM570 0h290v8L600 25z"/>
        <path class="fa wood" d="M240 0H600L580 25 860 5V35L240 78z"/>
        <path class="fa ind-area" d="M25 118L230 102 250 78 360 78 366 140 440 165 435 265 265 265 255 160 10 170zM195 740L225 710 258 735 215 760z"/>
        <path class="fa orch" d="M0 190L115 180 125 220 140 265 300 265 440 280 570 225 700 220 690 280 500 365 460 415H230L70 345 20 290 0 250z"/>
        <path class="fa town" d="M0 750L160 715 290 805 205 1020 20 1010zM620 970L665 972 860 1050V1290H635zM125 210L230 165 265 170V260L145 262z"/>
        <path class="fa mall" d="M305 505L440 528 455 705 390 715 300 665z"/>
        <path class="fa house" d="M310 525h62v8h30v15h15v18H305zM680 772l80 12-5 12-80-12zM45 518l34 8-10 14-28-8zM300 92h25v9h-25zM315 142h20v4h-20zM310 155h40v7h-40zM150 225h20v30h-20zM190 222h20v30h-20zM228 225h14v30h-14z"/>
        <path class="fa town" d="M5 575l70 0 75 25-100 70-45-50z"/>
        <path class="fa pitch" d="M50 600l60 0 5 30-50 12-30-20z"/>
        <path class="fa park" d="M5 580l25-8 10 15-30 15zM165 610l40 20-25 8z"/>
        <path class="fa lake" d="M5 625l40 20-5 20-35-8zM265 283l20 2-2 10-20-5z"/>
        <path class="bnd" d="M0 112L210 90 240 80 860 35M465 412L860 438M458 415L455 525 435 530 445 715 370 720 230 645 150 705 70 725 0 750"/>
        <path class="red" d="M10 380L100 330 130 270M12 468L150 440 225 380M230 440L125 515 135 560M95 660L170 685 230 650"/>
        <path class="trk" d="M230 415L240 460 300 495M440 185L680 170H860M150 710L200 755 285 805 240 1000 225 1020H5M145 715L145 910 165 925 130 1020M30 805L90 830 110 890H5M120 930L75 1015"/>
        <path class="case wide" d="M5 183L120 172 245 158 258 175 268 265 237 295 233 410M240 635L268 605 262 565 245 512 310 495 450 522M458 415L460 525 465 655 530 710 550 750 560 785M725 175L705 245 690 290 500 375 460 415"/>
        <path class="road widein" d="M5 183L120 172 245 158 258 175 268 265 237 295 233 410M240 635L268 605 262 565 245 512 310 495 450 522M458 415L460 525 465 655 530 710 550 750 560 785M725 175L705 245 690 290 500 375 460 415"/>
        <path class="road" d="M120 172L125 215 245 215M145 220L148 260 265 262M175 220V258M225 215V260M440 275L565 225 705 215M440 275L530 290 605 325M275 603H335V580M313 605V630M425 650h30M425 685l35 20 30 5"/>
        <path class="pow" d="M5 1055L65 912 105 825 170 775 222 738M16 575V600"/>
        <path class="case" d="M700 745L860 775M790 770L860 778M790 770L762 820 860 838M400 720L470 725 540 750"/>
        <path class="road" d="M700 745L860 775M790 770L860 778M790 770L762 820 860 838M400 720L470 725 540 750"/>
        <path class="fa pole" d="M16 1010h14v8H16zM60 908h10v8H60zM100 820h14v8h-14zM163 772h12v8h-12z"/>
        <path class="oc" d="M0 530L240 635 540 785 600 870 620 1275M690 840L860 890"/>
        <path class="oo" d="M0 530L240 635 540 785 600 870 620 1275M690 840L860 890"/>
        <path class="hou" d="M640 1000h80M650 1055h60M700 1100h100M700 1130h140M670 1180h170M670 1220h100M690 1260h140"/>
        <path class="road" d="M620 1035H770M685 1145V1065M687 1085H740M790 1085H860M690 1120H860M625 1150H860M645 1155L655 1290M655 1200L700 1160M705 1290V1220Q715 1180 860 1175M755 1290V1210H860M755 1270L860 1205M785 1290L860 1240"/>
      </g>
      <!-- south-west -->
      <g transform="translate(280 590) scale(.33333)">
        <path class="fa town" d="M635 0H860V1100L830 960 770 900 660 890 580 830 500 790 460 770 280 715 200 800 130 765 0 750V420L500 540 515 470 460 400 470 330 400 308 5 300V240L510 250 530 140 640 110z"/>
        <path class="fa land" d="M850 220L830 300 800 480 790 560 860 600z"/>
        <path class="fa ind-area" d="M152 335L310 322 438 324V500L200 435z"/>
        <path class="trk" d="M5 128H440L455 110 620 82"/>
        <path class="hou" d="M20 260H155M190 260H320M350 263H440M20 288H155M185 288H320M350 290H450M670 60V120M685 210L760 180M700 240H750M700 320L730 400M700 440H740M600 330L640 360M560 200V300M505 600V680M205 605H400M100 540L170 520M60 700V740M790 790V880M740 660L780 640M540 700H590M710 350V470M770 60L850 40M710 120H850M700 170H760"/>
        <path class="wat" d="M860 30L790 75 750 110 755 135 825 175 825 220 780 290 765 350 755 400 750 460 735 470 760 490 805 500M755 485L725 505 600 515 545 540 475 570V740L500 755 505 795 570 815 580 835 655 885 700 898 830 895 855 932M5 782L25 795 60 785 130 798 140 815 240 812 253 858 197 962 232 1132 420 1285"/>
        <path class="fa lake" d="M566 184h22v10h-22zM582 210h28v10h-28zM570 226h20v9h-20zM786 228h22v10h-22z"/>
        <path class="case" d="M5 272H470L550 268M620 82L740 90 860 118M0 352L148 373 200 440 480 515 860 518"/>
        <path class="road" d="M5 272H470L550 268M620 82L740 90 860 118M0 352L148 373 200 440 480 515 860 518M520 270L525 210 535 185M560 210L565 250M590 155L640 165 690 150M600 205L625 190 655 190M675 208H730M675 240H760M500 320V350L570 335 620 305 655 300M525 350V445M665 390L760 405 765 365M710 310L715 350M650 80V0M690 80L655 20M710 0L735 60 755 0M740 90L760 60 850 0M770 230V180L830 150 860 115M610 475H650M545 540L650 535M580 560V612H620V570M500 570V680M245 685H475L640 680 830 630H860M585 680L600 790M515 710H585M555 740H600M555 765H595M600 797H710M615 800L650 825M660 735V715L730 710M10 545L80 470 150 510 210 505 100 600 0 660M10 545L100 588M160 540L440 595M230 560L190 600M90 602L470 595M120 625L470 615M120 625L180 655 420 648M360 650V718H470M470 600V765M5 725H90M15 697H88M45 640L90 685V745H193V780"/>
        <path stroke="#bbb" stroke-width="7" d="M805 760L808 1280"/><path stroke="#f3f3f3" stroke-width="4" d="M805 760L808 1280"/>
        <path stroke="#aaa" stroke-width="5" d="M0 390L140 430 330 480 450 515M0 420L200 470 430 530"/>
        <path class="rail" d="M0 410L110 450 240 490 500 545 650 570 860 602"/>
        <path class="raildash" d="M0 410L110 450 240 490 500 545 650 570 860 602"/>
        <path class="pow" d="M0 585L110 635 195 672 317 730 440 783 555 835 825 952V1285M0 600L116 655 257 717 393 778 533 842 653 895 777 950 773 1220M0 632L107 678 275 755 402 808 600 898 742 990V1280M742 1157L680 1228 690 1285M0 1223L680 1255 860 1255M0 1237L660 1268"/>
        <path class="fa pole" d="M106 631h12v8h-12zM190 668h12v8h-12zM311 726h12v8h-12zM434 779h12v8h-12zM550 831h12v8h-12zM110 651h12v8h-12zM251 713h12v8h-12zM387 774h12v8h-12zM528 838h12v8h-12zM648 891h12v8h-12zM771 946h12v8h-12zM101 674h12v8h-12zM269 751h12v8h-12zM396 804h12v8h-12zM595 894h12v8h-12zM737 986h12v8h-12zM737 1087h12v8h-12zM737 1153h12v8h-12zM771 1010h12v8h-12zM768 1114h12v8h-12zM674 1224h12v8h-12zM737 1237h12v8h-12zM768 1218h12v8h-12zM768 1251h12v8h-12zM694 1251h12v8h-12zM780 1237h12v8h-12zM656 1264h12v8h-12zM823 1221h12v8h-12zM847 1251h12v8h-12z"/>
        <path class="red" d="M475 555L465 595 430 595"/>
        <path class="oc" d="M620 -5L630 130 667 195 665 300 655 400 648 520 665 580 700 640 860 810"/>
        <path class="oo" d="M620 -5L630 130 667 195 665 300 655 400 648 520 665 580 700 640 860 810"/>
      </g>
      <!-- east -->
      <g transform="translate(1085 170) scale(.33333 .5612)">
        <path class="fa bog" d="M440 5H870V200L800 170 700 110 640 80z"/>
        <path class="fa lake" d="M350 5H435L640 88 700 120 870 235V272L780 215 690 155 620 110zM265 48l12-4 58 20-8 5z"/>
        <path class="fa house" d="M290 35l35-8 15 5-35 12zM320 710l30-10 20 2-30 14zM470 1185h45v8h-45zM510 1193h28v-8h16v20h-44zM405 650h14v10h-14z"/>
        <path class="fa wood" d="M0 302L60 323 160 333 190 345 255 362 222 377 270 404 120 396 80 375 35 375 15 412H0z"/>
        <path class="fa golf" d="M0 410H20L35 390 90 390 120 400 220 408 270 425 272 483 205 486 195 510 140 520 150 545H0z"/>
        <path class="fa town" d="M395 643L600 618 805 632 730 748 580 795 597 1072 500 1076 400 1065 315 1035V1135L278 1140 273 1258 0 1245V830L40 815 110 760 210 750 400 700zM295 1355L320 1338 405 1352 385 1370 470 1400 430 1420 385 1415 375 1385 318 1372zM540 1335L690 1338 770 1350 675 1372z"/>
        <path class="trk" d="M285 5L360 35 410 60 550 130 790 240 830 270 850 320 870 322M355 1510L360 1490M595 1500V1480"/>
        <path class="wat" d="M0 550L90 553 160 547 210 530 260 506 350 492 430 473 700 336 775 350 870 317"/>
        <path class="wat" d="M320 1295L325 1278M380 995h20"/>
        <path stroke="#c2bdb8" d="M0 82L75 57 230 5"/>
        <path class="case" d="M0 200L100 160 375 65 410 58M0 545L110 552 125 570 105 630 75 660 55 715 0 725"/>
        <path class="road" d="M0 200L100 160 375 65 410 58M0 545L110 552 125 570 105 630 75 660 55 715 0 725"/>
        <path class="hou" d="M300 745L430 715M80 800H110M150 860V1000M100 880L230 895M445 900V1030M480 900V1025M515 900V1040M550 860V1030M330 900V1000M360 880H410M350 850H430M100 1000H180M20 900V1010M200 1080V1130M100 1060V1120M300 1070V1130M20 1180V1230"/>
        <path class="case" d="M70 825L58 1055 100 1062 165 1042 215 1042 208 1060V1200L222 1345 430 1388 540 1410 600 1405M555 830L585 1070M430 895V1030M498 895L508 1075 545 1090 570 1150 578 1225M632 628L592 702 642 740 705 632M642 740H708L760 634M315 805V775Q330 750 450 750L640 740M590 1475V1370Q590 1353 620 1353L735 1353M125 1060V1148M280 1035L285 1135 272 1215"/>
        <path class="road" d="M70 825L58 1055 100 1062 165 1042 215 1042 208 1060V1200L222 1345 430 1388 540 1410 600 1405M555 830L585 1070M430 895V1030M498 895L508 1075 545 1090 570 1150 578 1225M632 628L592 702 642 740 705 632M642 740H708L760 634M315 805V775Q330 750 450 750L640 740M590 1475V1370Q590 1353 620 1353L735 1353M125 1060V1148M280 1035L285 1135 272 1215"/>
        <path class="road" d="M210 750L330 725 390 700 460 698M433 698V660M125 752L130 770 160 775M165 822L270 800M260 820L310 808 365 810M70 840L220 835 390 848 420 893H500M355 900L420 893M70 875L250 870M140 875L150 910H20M210 930H420M140 973L280 975M185 968L190 1008M220 950L270 958M110 1040L160 1042V1020L115 1012M180 1040L215 1022M215 1042L300 1025 380 1022M50 1080H120M0 1130L570 1152M430 1030H590M455 1150L470 1165 505 1185M20 1135L25 1185M0 1185L90 1187 97 1240M20 1220L215 1237M167 1215V1248M600 1425L870 1453M200 1510L400 1480 590 1475M450 752V772M510 750L500 792"/>
        <path class="rail" d="M0 1255L870 1340"/><path class="raildash" d="M0 1255L870 1340"/>
        <path class="oc thin-oc" d="M0 733L200 752 215 760 225 795 262 820 258 855 290 960 305 1015 340 1045 400 1066 500 1076 870 1093"/>
        <path class="oo thin-oo" d="M0 733L200 752 215 760 225 795 262 820 258 855 290 960 305 1015 340 1045 400 1066 500 1076 870 1093"/>
        <path stroke="#fcd6a4" stroke-width="8" d="M208 755L218 790 262 825 262 870 300 990 305 1020"/>
      </g>
      <!-- southern strip -->
      <path class="fa wood" d="M772 1017l1-12 20-10h209v22z"/>
      <path class="oc" d="M675 990l26 30"/><path class="oo" d="M675 990l26 30"/>
      <path class="wat" d="M610 1017l18-6-2-14"/><path class="pow" d="M560 1008h75l25-10"/>
      <g font-family="DejaVu Sans" text-anchor="middle">
        <g font-size="10" font-weight="700" font-style="italic" fill="#7b5a7e" stroke="#f5eef3" stroke-width="2" paint-order="stroke"><text x="396" y="231">Южная</text><text x="396" y="241">водопроводная</text><text x="396" y="251">станция</text><text x="396" y="261">№2</text></g>
        <text x="522" y="194" font-size="10" font-style="italic" text-anchor="start" fill="#8d6f95">городской</text>
        <g fill="#f8e3cc" stroke="#d8b486"><rect x="446" y="436" width="74" height="13" rx="2"/><rect x="463" y="676" width="74" height="13" rx="2"/></g>
        <g font-size="11" fill="#6a4d20" font-weight="700"><text x="483" y="447">27А-025</text><text x="501" y="687">27А-083</text></g>
        <g font-size="16" fill="#777" stroke="#fff" stroke-width="3" paint-order="stroke"><text x="479" y="761">Луговое</text><text x="1195" y="650">Рыбное</text></g>
        <text x="281" y="745" font-size="10" text-anchor="start" font-weight="700" fill="#5058a8"><tspan>овое-</tspan><tspan x="281" y="754">вое</tspan></text>
        <text transform="translate(514 820) rotate(46)" text-anchor="start" font-size="11" fill="#3f2c0e">Центральная улица</text>
        <text transform="translate(1168 650) rotate(79)" text-anchor="start" font-size="8" fill="#3f2c0e">Гвардейская улица</text>
      </g>
    </svg>
  </section>

  <div class="split d-flex align-items-center justify-content-center"><span class="grip-v"></span></div>
  <aside class="rdock d-flex flex-column">
    <div class="dockhead d-flex align-items-center"><span class="me-auto">Инструменты анализа</span><button class="mini" aria-label="Открепить"><svg width="8" height="8"><use href="#fl"/></svg></button><button class="mini ms-1" aria-label="Закрыть панель"><svg width="8" height="8"><use href="#mx"/></svg></button></div>
    <div class="dtools d-flex align-items-center">
      <button class="tbtn" aria-label="Модели"><svg width="18" height="18"><circle cx="6" cy="6" r="3" fill="none" stroke="#c01820" stroke-width="2"/><path d="M6 0v12M0 6h12M2 2l8 8M10 2l-8 8" stroke="#c01820" stroke-width="1.500"/><circle cx="13" cy="9" r="2" fill="none" stroke="#777" stroke-width="2"/><circle cx="8" cy="14" r="2" fill="none" stroke="#5b87bf" stroke-width="2"/><path d="M12 14h6l-3 3z" fill="#aaa"/></svg></button>
      <button class="tbtn" aria-label="Python"><svg width="17" height="17"><use href="#py" width="15" height="16"/><path d="M11 14h6l-3 3z" fill="#aaa"/></svg></button>
      <button class="tbtn" aria-label="История"><svg width="16" height="16"><circle cx="8" cy="8" r="7" fill="#eee"/><path d="M8 3v5l3 2" stroke="#777" fill="none"/></svg></button>
      <button class="tbtn" aria-label="Результаты"><svg width="14" height="16"><path d="M1 1h8l4 4v10H1z" fill="#f2f2f2"/><path d="M3 5h5M3 8h8M3 10h8M3 12h8" stroke="#888"/></svg></button>
      <span class="sp8"></span>
      <button class="tbtn" aria-label="Правка на месте"><svg width="16" height="16"><path d="M1 2h11v10l-4 1H1z" fill="#f4dc39"/><path d="M8 15l6-9" stroke="#e7d47d" stroke-width="2.500"/></svg></button>
      <span class="sp8"></span>
      <button class="tbtn" aria-label="Параметры"><svg width="16" height="16"><path d="M1 4q3 3 5 0L4 1M6 5l3 3" stroke="#ddd" stroke-width="2" fill="none"/><path d="M8 8l6 6" stroke="#e6cf84" stroke-width="3"/></svg></button>
    </div>
    <div class="dk d-flex align-items-center"><svg class="ms-2 me-1" width="16" height="14"><circle cx="6" cy="6" r="4.500" fill="none" stroke="#888" stroke-width="1.300"/><path d="M9 9l4 4" stroke="#888" stroke-width="1.300"/></svg><input class="bare" type="search" placeholder="Поиск..." aria-label="Поиск"></div>
    <div class="treebox rtree flex-grow-1">
      <ul class="list-unstyled m-0">
        <li><i class="tw r"></i><svg><use href="#q"/></svg><span>Вектор — Таблица атрибутов</span></li>
        <li><i class="tw r"></i><svg><use href="#q"/></svg><span>Векторные тайлы</span></li>
        <li><i class="tw r"></i><svg><use href="#q"/></svg><span>Инструменты обработки растра</span></li>
        <li><i class="tw r"></i><svg><use href="#q"/></svg><span>Инструменты пространственных о...</span></li>
        <li><i class="tw r"></i><svg><use href="#q"/></svg><span>Интерполяция</span></li>
        <li><i class="tw r"></i><svg><use href="#q"/></svg><span>Картография</span></li>
        <li><i class="tw r"></i><svg><use href="#q"/></svg><span>Меш</span></li>
        <li><i class="tw r"></i><svg><use href="#q"/></svg><span>Общие инструменты векторных да...</span></li>
        <li><i class="tw r"></i><svg><use href="#q"/></svg><span>Растр — Анализ рельефа</span></li>
        <li><i class="tw r"></i><svg><use href="#q"/></svg><span>Растр — Создание</span></li>
        <li><i class="tw r"></i><svg><use href="#q"/></svg><span>Сетевой анализ</span></li>
        <li><i class="tw r"></i><svg><use href="#q"/></svg><span>Слои</span></li>
        <li><i class="tw r"></i><svg><use href="#q"/></svg><span>Файлы</span></li>
        <li><i class="tw r"></i><svg><use href="#q"/></svg><span>Check geometry</span></li>
        <li><i class="tw d"></i><svg><use href="#q"/></svg><span>Database</span></li>
        <li class="alg"><svg><use href="#alg"/></svg><span>Выполнить и загрузить SQL Pos...</span></li>
        <li class="alg"><svg><use href="#alg"/></svg><span>Выполнить PostgreSQL SQL</span></li>
        <li class="alg"><svg><use href="#alg"/></svg><span>Выполнить SpatiaLite SQL</span></li>
        <li class="alg"><svg><use href="#alg"/></svg><span>Выполнить SpatiaLite SQL (в зар...</span></li>
        <li class="alg"><svg><use href="#alg"/></svg><span>Упаковка слоев</span></li>
        <li class="alg"><svg><use href="#alg"/></svg><span>Экспорт в SpatiaLite</span></li>
        <li class="alg"><svg><use href="#alg"/></svg><span>Export to PostgreSQL</span></li>
        <li><i class="tw r"></i><svg><use href="#q"/></svg><span>Fix geometry</span></li>
        <li><i class="tw r"></i><svg><use href="#q"/></svg><span>GPS</span></li>
        <li><i class="tw r"></i><svg><use href="#q"/></svg><span>Metadata tools</span></li>
        <li><i class="tw r"></i><svg><use href="#q"/></svg><span>Plots</span></li>
        <li><i class="tw r"></i><svg><use href="#q"/></svg><span>Point cloud conversion</span></li>
        <li><i class="tw r"></i><svg><use href="#q"/></svg><span>Point cloud data management</span></li>
        <li><i class="tw r"></i><svg><use href="#q"/></svg><span>Point cloud extraction</span></li>
        <li><i class="tw r"></i><svg><use href="#q"/></svg><span>Vector coverage</span></li>
        <li><i class="tw d"></i><svg><use href="#gdal"/></svg><span>GDAL</span></li>
        <li class="sub"><i class="tw r"></i><span>Геообработка векторных данных</span></li>
        <li class="sub"><i class="tw r"></i><span>Извлечение из растра</span></li>
        <li class="sub"><i class="tw r"></i><span>Конвертация растра</span></li>
        <li class="sub"><i class="tw r"></i><span>Преобразование векторных данных</span></li>
        <li class="sub"><i class="tw r"></i><span>Проекции растра</span></li>
        <li class="sub"><i class="tw r"></i><span>Прочие операции с векторными об...</span></li>
        <li class="sub"><i class="tw r"></i><span>Прочие операции с растрами</span></li>
        <li class="sub"><i class="tw r"></i><span>Растр - Анализ</span></li>
      </ul>
      <div class="sbar"><b><i class="tri-u"></i></b><span class="above"></span><span class="thumb flex-grow-1"></span><b><i class="tri-d"></i></b></div>
    </div>
  </aside>
</main>

<footer class="statusbar d-flex align-items-center">
  <div class="dk locator d-flex align-items-center"><svg class="ms-2" width="16" height="14"><circle cx="6" cy="6" r="4.500" fill="none" stroke="#aaa" stroke-width="1.300"/><path d="M9 9l4 4" stroke="#aaa" stroke-width="1.300"/></svg><input class="bare" type="search" placeholder="Искать (Ctrl+K)" aria-label="Искать"></div>
  <label class="ms-auto" for="xy">Координаты</label>
  <input class="dk f120 text-center" id="xy" value="54,6857°  20,68107°">
  <svg class="ms-1" width="20" height="20"><path d="M2 5l7 8M6 2l6 9M1 10l7 5" stroke="#ddd" stroke-width="2" stroke-dasharray="3 1"/><circle cx="13" cy="14" r="4" fill="#222" stroke="#eee" stroke-width="2"/></svg>
  <label class="m10" for="sc">Масштаб</label>
  <input class="dk f67 rounded-end-0" id="sc" value="1:9984"><button class="gray f20 d-grid" aria-label="Список масштабов"><i class="tri-d m-auto"></i></button>
  <svg class="m16" width="12" height="16" viewBox="0 0 14 16"><path d="M3 8V5q4-7 8 0v3" stroke="#aaa" stroke-width="2" fill="none"/><rect x="1" y="7" width="12" height="8" rx="1" fill="#aaa"/></svg>
  <label class="m8" for="mg">Увеличение</label>
  <span class="spin w89"><input id="mg" value="100%"><span><i class="tri-u"></i><i class="tri-d"></i></span></span>
  <label class="m10" for="rt">Поворот</label>
  <span class="spin w89 ms-1"><input id="rt" value="0,0 °"><span><i class="tri-u"></i><i class="tri-d"></i></span></span>
  <input class="tickbox m16" type="checkbox" id="rn" checked><label class="ms-1" for="rn">Отрисовка</label>
  <svg class="m10 me-1" width="15" height="15"><circle cx="7.500" cy="7.500" r="7" fill="#b5b5b5"/><path d="M0 5h15M0 8h15M0 11h15M7.500 0v15M4 1q-2 6 0 13M11 1q2 6 0 13" stroke="#444" stroke-width=".8" fill="none"/></svg><span>EPSG:4326</span>
  <svg class="m21 me-2" width="17" height="16"><ellipse cx="8.500" cy="7" rx="8" ry="6.500" fill="#8a8a8a"/><path d="M9 12l5 4v-5z" fill="#8a8a8a"/><path d="M4 7h2M7.500 7h2M11 7h2" stroke="#222" stroke-width="2"/></svg>
</footer>

<section class="qwin" role="dialog" aria-labelledby="qt">
  <div class="qhead d-flex align-items-center"><div></div><span id="qt">QTiles</span>
    <div class="wbtns"><button class="wbtn" aria-label="Свернуть"><svg width="8" height="8"><path d="M1 7h6" stroke="#fff" stroke-width="2"/></svg></button><button class="wbtn" aria-label="Развернуть"><svg width="8" height="8"><path d="M3 0h5v5zM0 3v5h5z" fill="#fff"/></svg></button><button class="wbtn" aria-label="Закрыть"><svg width="9" height="9"><path d="M1 1l7 7M8 1L1 8" stroke="#fff" stroke-width="2"/></svg></button></div>
  </div>
  <form class="qbody">
    <div class="qform">
      <div class="d-flex align-items-center"><label class="nmlab fw-bold text-end" for="nm">Название набора</label><input class="form-control dk flex-fill w-50" id="nm" value="tiles"></div>
      <h6 class="gtitle fw-normal">Результат</h6>
      <div class="gbox g-out">
        <div class="r29 d-flex"><div class="lab"><input class="form-check-input" type="radio" name="out" id="o1"><label for="o1">Файл</label></div><svg width="11" height="26"><use href="#info" y="7" width="11" height="11"/></svg><input class="form-control dk ms-2 flex-fill w-50" aria-label="Файл" disabled><svg width="31" height="26"><path d="M16 14.500h3.500q1 0 1 1V22" fill="none" stroke="#ddd"/></svg></div>
        <div class="r29 d-flex"><div class="lab"><input class="form-check-input" type="radio" name="out" id="o2" checked><label for="o2">Каталог</label></div><svg width="11" height="26"><use href="#info" y="7" width="11" height="11"/></svg><input class="form-control dk ms-2 flex-fill w-50" aria-label="Каталог" value="/home/user/Документы/mygis/gisapp/static"><button type="button" class="btn gray dots">...</button></div>
        <div class="r29 d-flex"><div class="lab"><input class="form-check-input" type="radio" name="out" id="o3"><label class="d-flex align-items-center gap-1" for="o3"><svg width="16" height="16"><path d="M0 0h16v13l-8 3-8-3z" fill="#2fb4dc"/><path d="M8 1.500c5 0 6 5 3 8L8 13 5 9.500c-3-3-2-8 3-8z" fill="#fff"/><circle cx="8" cy="6" r="2.300" fill="#2fb4dc"/></svg>NGM</label></div><svg width="11" height="26"><use href="#info" y="7" width="11" height="11"/></svg><input class="form-control dk ms-2 flex-fill w-50" aria-label="NGM" disabled><svg width="31" height="26"><path d="M16 12.500h3.500q1 0 1-1V5" fill="none" stroke="#ddd"/></svg></div>
      </div>
      <h6 class="gtitle fw-normal">Охват</h6>
      <div class="gbox g-ext">
        <div class="r27 d-flex align-items-center"><input class="form-check-input" type="radio" name="ext" id="e1" checked><label for="e1">Текущий охват карты</label></div>
        <div class="r27 d-flex align-items-center"><input class="form-check-input" type="radio" name="ext" id="e2"><label for="e2">Полный охват</label></div>
        <div class="r29 d-flex align-items-center"><input class="form-check-input" type="radio" name="ext" id="e3"><label class="laylab" for="e3">Охват слоя</label><div class="caretbox flex-fill"><select class="gray laysel w-100" aria-label="Слой" disabled><option>points</option></select></div></div>
      </div>
      <h6 class="gtitle fw-normal">Масштаб</h6>
      <div class="gbox g-scale">
        <div class="r30 d-flex align-items-center"><label class="fieldlab" for="z1">Минимальный масштаб</label><span class="spin w42"><input type="number" id="z1" value="17"><span><i class="tri-u"></i><i class="tri-d"></i></span></span></div>
        <div class="r30 d-flex align-items-center"><label class="fieldlab" for="z2">Максимальный масштаб</label><span class="spin w42"><input type="number" id="z2" value="22"><span><i class="tri-u"></i><i class="tri-d"></i></span></span></div>
      </div>
      <h6 class="gtitle fold fw-bold d-flex align-items-center"><svg class="ms-1 me-2" width="10" height="8"><path d="M0 .500h10L5 7z" fill="#3a3a3a" stroke="#0f0f0f"/></svg>Параметры</h6>
      <div class="gbox g-par">
        <div class="d-flex">
          <div>
            <div class="r29 d-flex align-items-center"><label class="plabels" for="p1">Ширина тайла</label><span class="spin w60"><input type="number" id="p1" value="256"><span><i class="tri-u"></i><i class="tri-d"></i></span></span></div>
            <div class="r29 d-flex align-items-center"><label class="plabels dimtext" for="p2">Высота тайла</label><span class="spin dim w60"><input type="number" id="p2" value="256" disabled><span><i class="tri-u"></i><i class="tri-d"></i></span></span></div>
          </div>
          <div class="beside d-flex flex-column align-items-center justify-content-center"><svg width="14" height="8"><path d="M4 .500h3.500q1 0 1 1V8" fill="none" stroke="#ddd"/></svg><input class="tickbox my-1" type="checkbox" aria-label="Связать размеры" checked><svg width="14" height="8"><path d="M4 7.500h3.500q1 0 1-1V0" fill="none" stroke="#ddd"/></svg></div>
        </div>
        <div class="r29 d-flex align-items-center"><label class="plabels" for="p3">Формат</label><div class="caretbox"><select class="gray fmt" id="p3"><option>PNG</option></select><i class="drop"></i></div></div>
        <div class="r29 d-flex align-items-center"><label class="plabels" for="p4">Прозрачность фона</label><span class="spin w60"><input type="number" id="p4" value="255"><span><i class="tri-u opacity-50"></i><i class="tri-d"></i></span></span></div>
        <div class="r29 d-flex align-items-center"><label class="plabels" for="p5">Качество</label><span class="spin dim w60"><input type="number" id="p5" value="70" disabled><span><i class="tri-u"></i><i class="tri-d"></i></span></span><span class="beside">(0-100)</span></div>
        <div class="r27 d-flex align-items-center"><input class="tickbox me-1" type="checkbox" id="c1"><label for="c1">Рисовать сглаженные линии (снижает скорость отрисовки)</label></div>
        <div class="r27 d-flex align-items-center"><input class="tickbox me-1" type="checkbox" id="c2"><label for="c2">Использовать спецификацию TMS (по умолчанию Slippy Map)</label></div>
        <div class="r27 d-flex align-items-center"><input class="tickbox me-1" type="checkbox" id="c3"><label for="c3">Рисовать тайлы вне границ слоёв, но в охвате</label></div>
        <div class="r27 d-flex align-items-center"><input class="tickbox me-1" type="checkbox" id="c4" disabled><label class="dimtext" for="c4">Использовать сжатие MBTiles</label></div>
        <div class="r27 d-flex align-items-center"><input class="tickbox me-1" type="checkbox" id="c5"><label for="c5">Сохранить метаданные в файл .json</label></div>
        <div class="r27 d-flex align-items-center"><input class="tickbox me-1" type="checkbox" id="c6"><label for="c6">Создать файл обзорного изображения карты</label></div>
        <div class="r27 d-flex align-items-center"><input class="tickbox me-1" type="checkbox" id="c7"><label for="c7">Создать файл .mapurl</label></div>
        <div class="r27 d-flex align-items-center"><input class="tickbox me-1" type="checkbox" id="c8"><label for="c8">Создать просмотрщик на Leaflet</label></div>
      </div>
    </div>
    <div class="qfoot d-flex align-items-center"><div class="qprog d-flex align-items-center justify-content-center me-auto" role="progressbar" aria-label="Ход" aria-valuenow="0" aria-valuemin="0" aria-valuemax="100">0%</div><button type="button" class="btn gray closebtn">Закрыть</button><button type="button" class="btn gray run">Запустить</button></div>
  </form>
</section>
<script src="https://cdn.jsdelivr.net/npm/bootstrap@5.3.0/dist/js/bootstrap.bundle.min.js"></script>
</body>
</html>
